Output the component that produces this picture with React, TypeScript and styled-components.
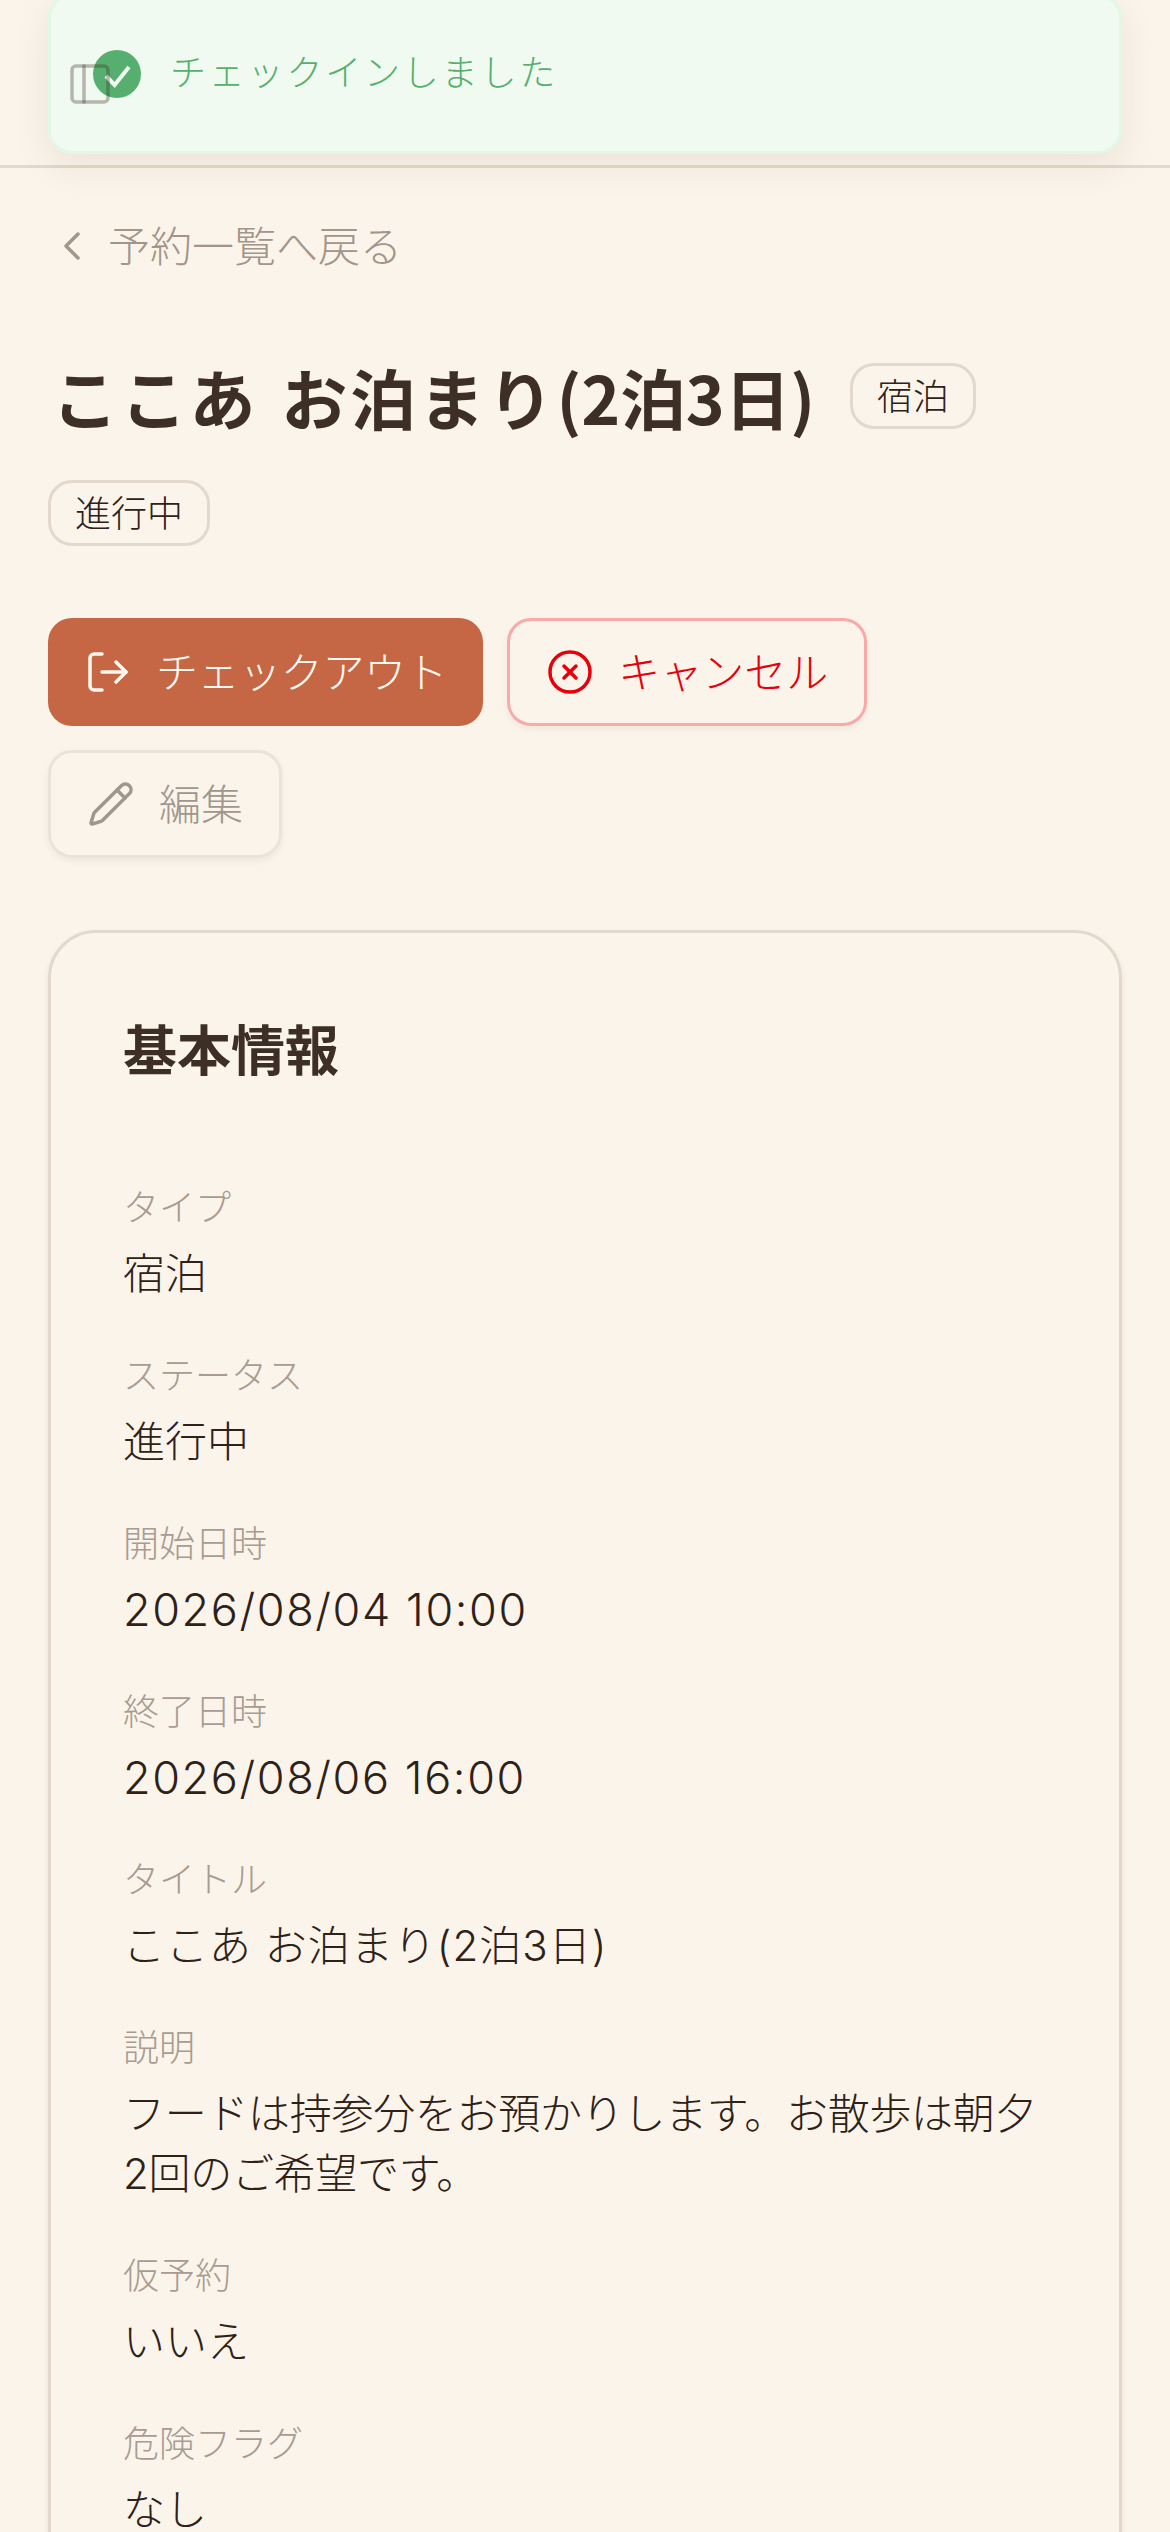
import styled, { createGlobalStyle } from "styled-components";
import { ChevronLeft, CircleX, LogOut, PanelLeft, Pencil } from "lucide-react";

const GlobalStyle = createGlobalStyle`
  html, body {
    margin: 0;
    padding: 0;
    background: #fbf4ea;
  }
  body {
    font-family: "Noto Sans CJK JP", "Noto Sans", sans-serif;
    color: #3d2f25;
  }
  * {
    box-sizing: border-box;
  }
`;

const Page = styled.div`
  position: relative;
  width: 1170px;
  height: 2532px;
  overflow: hidden;
  background: #fbf4ea;
`;

const Header = styled.div`
  height: 168px;
  border-bottom: 3px solid #e2d8cb;
`;

const Toast = styled.div`
  position: absolute;
  top: -6px;
  left: 48px;
  width: 1074px;
  height: 160px;
  display: flex;
  align-items: center;
  gap: 29px;
  padding: 0 42px;
  background: #f0faf0;
  border: 3px solid #e2f8e6;
  border-radius: 24px;
  box-shadow: 0 12px 36px rgba(60, 40, 20, 0.08);
  color: #56af6e;
  font-size: 36px;
  font-weight: 300;
  letter-spacing: 2.8px;
`;

const ToastText = styled.span`
  margin-bottom: 8px;
`;

const SidebarToggle = styled.div`
  position: absolute;
  top: 60px;
  left: 66px;
  display: flex;
  color: rgba(61, 47, 37, 0.33);
`;

const Main = styled.main`
  padding: 0 48px;
`;

const BackLink = styled.div`
  display: flex;
  align-items: center;
  gap: 12px;
  height: 60px;
  margin-top: 48px;
  color: #a2958a;
  font-size: 42px;
  font-weight: 300;
`;

const BackText = styled.span`
  margin-bottom: 6px;
`;

const TitleRow = styled.div`
  display: flex;
  align-items: center;
  gap: 35px;
  margin-top: 75px;
`;

const Title = styled.h1`
  margin: 0;
  padding-left: 4px;
  font-size: 66px;
  line-height: 90px;
  font-weight: 700;
  letter-spacing: 2.8px;
  word-spacing: 5px;
  color: #3d2f25;
`;

const TitleStay = styled.span`
  letter-spacing: -0.2px;
`;

const Badge = styled.span`
  display: inline-flex;
  align-items: center;
  justify-content: center;
  height: 66px;
  padding: 0 24px 4px;
  border: 3px solid #e2d8cb;
  border-radius: 24px;
  font-size: 36px;
  font-weight: 300;
  color: #2e2118;
`;

const StatusRow = styled.div`
  display: flex;
  margin-top: 39px;
`;

const Actions = styled.div`
  display: flex;
  flex-wrap: wrap;
  gap: 24px;
  margin-top: 72px;
`;

const ActionButton = styled.button<{ $tone: "primary" | "danger" | "muted" }>`
  display: inline-flex;
  align-items: center;
  gap: 24px;
  height: 108px;
  padding: 0 36px;
  border-radius: 24px;
  font-family: inherit;
  font-size: 42px;
  font-weight: 300;
  border: ${(p) =>
    p.$tone === "primary"
      ? "none"
      : p.$tone === "danger"
        ? "3px solid #f7aaa8"
        : "3px solid #ece3d8"};
  background: ${(p) => (p.$tone === "primary" ? "#c56744" : "transparent")};
  color: ${(p) =>
    p.$tone === "primary" ? "#fff8f0" : p.$tone === "danger" ? "#e7000b" : "#a0978c"};
  box-shadow: ${(p) => (p.$tone === "primary" ? "none" : "0 3px 6px rgba(60, 40, 20, 0.06)")};
`;

const ButtonLabel = styled.span<{ $tight?: boolean }>`
  margin-bottom: 6px;
  letter-spacing: ${(p) => (p.$tight ? "-0.4px" : "0")};
`;

const Card = styled.section`
  margin-top: 72px;
  padding: 79px 72px 0;
  height: 1700px;
  border: 3px solid #e2d8cb;
  border-radius: 48px;
  box-shadow: 0 3px 6px rgba(60, 40, 20, 0.08);
`;

const CardTitle = styled.h2`
  margin: 0 0 94px;
  font-size: 54px;
  line-height: 72px;
  font-weight: 700;
`;

const Field = styled.div`
  margin-bottom: 42px;
`;

const Label = styled.div`
  font-size: 36px;
  line-height: 54px;
  font-weight: 300;
  color: #a89c92;
`;

type ValueKind = "plain" | "date" | "title" | "note";

const Value = styled.div<{ $kind: ValueKind }>`
  margin-top: 12px;
  font-family: "Inter", "Noto Sans CJK JP", sans-serif;
  font-size: ${(p) => (p.$kind === "date" ? "45px" : "42px")};
  line-height: 60px;
  font-weight: 300;
  letter-spacing: ${(p) =>
    p.$kind === "date"
      ? "1.6px"
      : p.$kind === "title"
        ? "1px"
        : p.$kind === "note"
          ? "-0.3px"
          : "0"};
  color: #2e2118;
`;

const fields: { label: string; value: string; kind: ValueKind }[] = [
  { label: "タイプ", value: "宿泊", kind: "plain" },
  { label: "ステータス", value: "進行中", kind: "plain" },
  { label: "開始日時", value: "2026/08/04 10:00", kind: "date" },
  { label: "終了日時", value: "2026/08/06 16:00", kind: "date" },
  { label: "タイトル", value: "ここあ お泊まり(2泊3日)", kind: "title" },
  { label: "説明", value: "フードは持参分をお預かりします。お散歩は朝夕2回のご希望です。", kind: "note" },
  { label: "仮予約", value: "いいえ", kind: "plain" },
  { label: "危険フラグ", value: "なし", kind: "plain" },
];

export default function App() {
  return (
    <Page>
      <GlobalStyle />
      <Header />
      <Toast>
        <svg width="48" height="48" viewBox="0 0 24 24">
          <circle cx="12" cy="12" r="12" fill="#56af6e" />
          <path d="M6.5 13l4.3 4.5L18 8.5" fill="none" stroke="#f0faf0" strokeWidth="2" />
        </svg>
        <ToastText>チェックインしました</ToastText>
      </Toast>
      <SidebarToggle>
        <PanelLeft size={48} strokeWidth={1.75} />
      </SidebarToggle>
      <Main>
        <BackLink>
          <ChevronLeft size={48} strokeWidth={1.75} />
          <BackText>予約一覧へ戻る</BackText>
        </BackLink>
        <TitleRow>
          <Title>
            ここあ お泊まり<TitleStay>(2泊3日)</TitleStay>
          </Title>
          <Badge>宿泊</Badge>
        </TitleRow>
        <StatusRow>
          <Badge>進行中</Badge>
        </StatusRow>
        <Actions>
          <ActionButton $tone="primary">
            <LogOut size={48} strokeWidth={1.75} />
            <ButtonLabel $tight>チェックアウト</ButtonLabel>
          </ActionButton>
          <ActionButton $tone="danger">
            <CircleX size={48} strokeWidth={1.75} />
            <ButtonLabel>キャンセル</ButtonLabel>
          </ActionButton>
          <ActionButton $tone="muted">
            <Pencil size={48} strokeWidth={1.75} />
            <ButtonLabel>編集</ButtonLabel>
          </ActionButton>
        </Actions>
        <Card>
          <CardTitle>基本情報</CardTitle>
          {fields.map((f) => (
            <Field key={f.label}>
              <Label>{f.label}</Label>
              <Value $kind={f.kind}>{f.value}</Value>
            </Field>
          ))}
        </Card>
      </Main>
    </Page>
  );
}
